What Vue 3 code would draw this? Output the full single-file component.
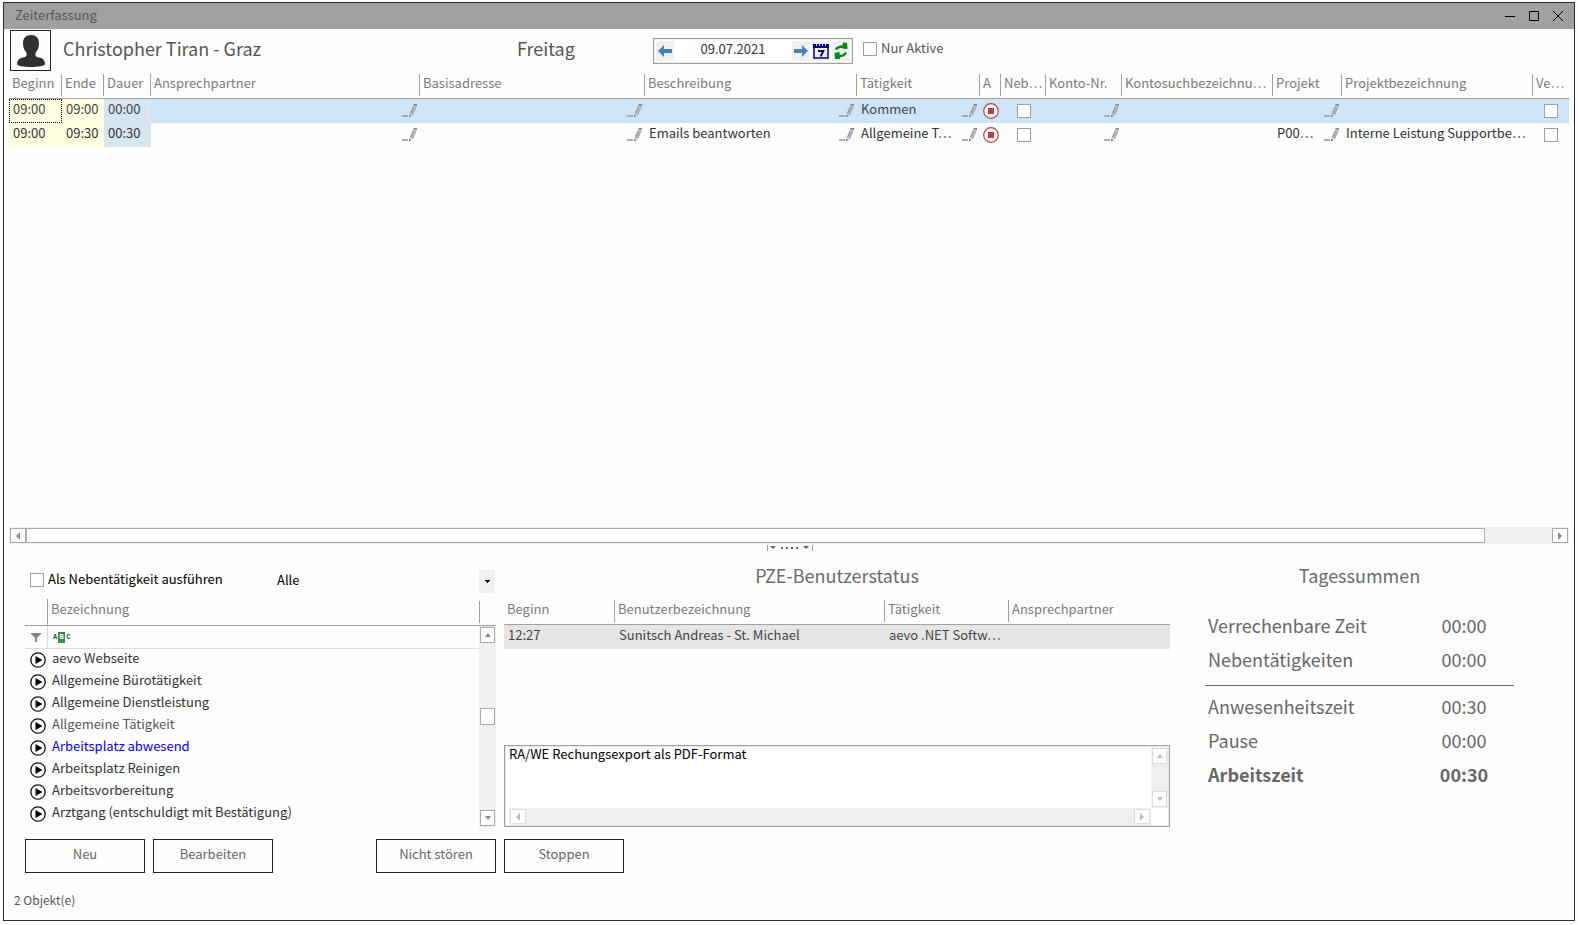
<script setup>
import { ref } from 'vue'

const columns = [
  { label: 'Beginn', width: 'w-begin' },
  { label: 'Ende', width: 'w-end' },
  { label: 'Dauer', width: 'w-duration' },
  { label: 'Ansprechpartner', width: 'w-contact' },
  { label: 'Basisadresse', width: 'w-address' },
  { label: 'Beschreibung', width: 'w-description' },
  { label: 'Tätigkeit', width: 'w-activity' },
  { label: 'A', width: 'w-a' },
  { label: 'Neb…', width: 'w-side' },
  { label: 'Konto-Nr.', width: 'w-account' },
  { label: 'Kontosuchbezeichnu…', width: 'w-search' },
  { label: 'Projekt', width: 'w-project' },
  { label: 'Projektbezeichnung', width: 'w-projectname' },
  { label: 'Ve…', width: 'w-billable' },
]

const entries = ref([
  { begin: '09:00', end: '09:00', duration: '00:00', description: '', activity: 'Kommen', project: '', projectName: '', side: false, billable: false, selected: true },
  { begin: '09:00', end: '09:30', duration: '00:30', description: 'Emails beantworten', activity: 'Allgemeine T…', project: 'P00…', projectName: 'Interne Leistung Supportbe…', side: false, billable: false, selected: false },
])

const activities = [
  { name: 'aevo Webseite' },
  { name: 'Allgemeine Bürotätigkeit' },
  { name: 'Allgemeine Dienstleistung' },
  { name: 'Allgemeine Tätigkeit', tone: 'muted' },
  { name: 'Arbeitsplatz abwesend', tone: 'absent' },
  { name: 'Arbeitsplatz Reinigen' },
  { name: 'Arbeitsvorbereitung' },
  { name: 'Arztgang (entschuldigt mit Bestätigung)' },
]

const sums = [
  { label: 'Verrechenbare Zeit', value: '00:00' },
  { label: 'Nebentätigkeiten', value: '00:00', last: true },
  { label: 'Anwesenheitszeit', value: '00:30', ruled: true },
  { label: 'Pause', value: '00:00' },
  { label: 'Arbeitszeit', value: '00:30', total: true },
]

const date = ref('09.07.2021')
const onlyActive = ref(false)
const asSide = ref(false)
const filter = ref('Alle')
const note = ref('RA/WE Rechungsexport als PDF-Format')
</script>

<template>
  <svg class="sprite" aria-hidden="true">
    <symbol id="pencil" viewBox="0 0 15 14">
      <path d="M0 11h6v2H0z" fill="#adadad" />
      <path d="M11 2 14.500 3 11 11 7.500 9.500z" fill="#a0a0a0" />
      <path d="M11.500 0h3.500v2.200l-4-1z" fill="#8c8c8c" />
      <path d="M7 10.500v3l3-1.500z" fill="#8a8a8a" />
      <path d="M12.500 3.500 9.500 10" stroke="#dedede" stroke-width="1" stroke-dasharray="1.500 1" />
    </symbol>
  </svg>
  <main class="window">
    <header class="titlebar">
      <span>Zeiterfassung</span>
      <div class="window-buttons">
        <button type="button" aria-label="Minimieren"><svg viewBox="0 0 12 12"><path d="M1 6.500h10" /></svg></button>
        <button type="button" aria-label="Maximieren"><svg viewBox="0 0 12 12"><path d="M1.500 1.500h9v9h-9z" /></svg></button>
        <button type="button" aria-label="Schließen"><svg viewBox="0 0 12 12"><path d="M1 1l10 10M11 1 1 11" /></svg></button>
      </div>
    </header>

    <section class="userbar">
      <div class="avatar">
        <svg viewBox="0 0 39 39"><path d="M20 4c5 0 8 3 8 8 0 4-1 7-3 9-1 2-1 4 1 5l4 1c3 1 4 4 4 6 0 2-6 3-14 3S6 35 6 33s1-5 4-6l4-1c2-1 2-3 1-5-2-2-3-5-3-9 0-5 3-8 8-8z" fill="#303030" /></svg>
      </div>
      <h1>Christopher Tiran - Graz</h1>
      <span class="weekday">Freitag</span>
      <div class="datebox">
        <button type="button" aria-label="Vorheriger Tag"><svg viewBox="0 0 18 20"><path d="M2 10l6-6v4h8v4H8v4z" fill="#4a7fb8" /></svg></button>
        <input v-model="date" type="text" aria-label="Datum">
        <button type="button" aria-label="Nächster Tag"><svg viewBox="0 0 18 20"><path d="M16 10l-6-6v4H2v4h8v4z" fill="#4a7fb8" /></svg></button>
        <button type="button" aria-label="Kalender">
          <svg viewBox="0 0 18 20">
            <path d="M2 4h14v13H2z" fill="#f0f0f0" stroke="#000080" stroke-width="1.500" />
            <path d="M1 3h16v4H1z" fill="#000080" />
            <path d="M4.500 2v3M7.500 2v3M10.500 2v3M13.500 2v3" stroke="#e4e4f4" />
            <path d="M6 10h5.500L8.500 15.500" fill="none" stroke="#000080" stroke-width="1.800" />
          </svg>
        </button>
        <button type="button" aria-label="Aktualisieren">
          <svg viewBox="0 0 18 20">
            <path d="M4 8.500q2-3.500 8-3M14 11.500q-2 4-8 3.500" fill="none" stroke="#008a0c" stroke-width="2.400" />
            <path d="M11 1.500l4 .5.500 6-5.500-.5zM7.500 11l-5 1 .500 6 5 0z" fill="#008a0c" />
          </svg>
        </button>
      </div>
      <label class="check"><input v-model="onlyActive" type="checkbox"><span>Nur Aktive</span></label>
    </section>

    <section class="entries">
      <table class="grid">
        <colgroup><col v-for="c in columns" :key="c.label" :class="c.width"></colgroup>
        <thead>
          <tr><th v-for="c in columns" :key="c.label" scope="col"><span>{{ c.label }}</span></th></tr>
        </thead>
        <tbody>
          <tr v-for="(e, i) in entries" :key="i" :class="{ selected: e.selected }">
            <td class="yellow" :class="{ focus: e.selected }">{{ e.begin }}</td>
            <td class="yellow">{{ e.end }}</td>
            <td class="blue">{{ e.duration }}</td>
            <td><div class="editable"><span></span><svg><use href="#pencil" /></svg></div></td>
            <td><div class="editable"><span></span><svg><use href="#pencil" /></svg></div></td>
            <td><div class="editable"><span>{{ e.description }}</span><svg><use href="#pencil" /></svg></div></td>
            <td><div class="editable"><span>{{ e.activity }}</span><svg><use href="#pencil" /></svg></div></td>
            <td class="center">
              <button type="button" class="stop" aria-label="Stoppen">
                <svg viewBox="0 0 16 16"><circle cx="8" cy="8" r="7.300" fill="#fff" stroke="#c23b3b" stroke-width="1.200" /><path d="M5 5h6v6H5z" fill="#c23b3b" /></svg>
              </button>
            </td>
            <td class="center"><input v-model="e.side" type="checkbox" aria-label="Nebentätigkeit"></td>
            <td><div class="editable"><span></span><svg><use href="#pencil" /></svg></div></td>
            <td></td>
            <td><div class="editable"><span>{{ e.project }}</span><svg><use href="#pencil" /></svg></div></td>
            <td>{{ e.projectName }}</td>
            <td class="center"><input v-model="e.billable" type="checkbox" aria-label="Verrechenbar"></td>
          </tr>
        </tbody>
      </table>
    </section>

    <div class="hscroll">
      <button type="button" aria-label="Nach links"><svg viewBox="0 0 8 8"><path d="M6 0v8L2 4z" /></svg></button>
      <div class="thumb"></div>
      <div class="rest"></div>
      <button type="button" aria-label="Nach rechts"><svg viewBox="0 0 8 8"><path d="M2 0v8l4-4z" /></svg></button>
    </div>

    <div class="splitter">
      <svg viewBox="0 0 46 6"><path d="M0 0h1v6H0zM45 0h1v6h-1z" fill="#999" /><path d="M3 1h6L6 4zM36 1h6l-3 3zM14 2h2v2h-2zM19 2h2v2h-2zM24 2h2v2h-2zM29 2h2v2h-2z" fill="#666" /></svg>
    </div>

    <section class="lower">
      <div class="panel">
        <div class="options">
          <label class="check"><input v-model="asSide" type="checkbox"><span>Als Nebentätigkeit ausführen</span></label>
          <div class="select">
            <select v-model="filter" aria-label="Tätigkeiten filtern"><option>Alle</option></select>
            <svg viewBox="0 0 16 23" aria-hidden="true"><path d="M6 10h5v1H6zM7 11h3v1H7zM8 12h1v1H8z" /></svg>
          </div>
        </div>
        <div class="list-head"><span></span><span class="head-name">Bezeichnung</span><span class="head-end"></span></div>
        <div class="list-body">
          <div class="list">
            <div class="filter-row">
              <span class="funnel"><svg viewBox="0 0 10 9"><path d="M0 0h10v1L6 5v4H4V5L0 1z" fill="#888" /></svg></span>
              <span class="abc"><i>A</i><b>B</b><i>C</i></span>
            </div>
            <ul>
              <li v-for="a in activities" :key="a.name" :class="a.tone">
                <button type="button" :aria-label="a.name + ' starten'">
                  <svg viewBox="0 0 16 16"><circle cx="8" cy="8" r="7.200" fill="#fff" stroke="#111" stroke-width="1.300" /><path d="M5.500 4l7 4-7 4z" fill="#000" /></svg>
                </button>
                <span>{{ a.name }}</span>
              </li>
            </ul>
          </div>
          <div class="vscroll">
            <button type="button" aria-label="Nach oben"><svg viewBox="0 0 8 8"><path d="M1 6h6L4 2z" /></svg></button>
            <div class="before"></div>
            <div class="thumb"></div>
            <div class="after"></div>
            <button type="button" aria-label="Nach unten"><svg viewBox="0 0 8 8"><path d="M1 2h6L4 6z" /></svg></button>
          </div>
        </div>
        <div class="actions">
          <button type="button">Neu</button>
          <button type="button">Bearbeiten</button>
          <button type="button" class="push">Nicht stören</button>
        </div>
      </div>

      <div class="panel">
        <h2>PZE-Benutzerstatus</h2>
        <table class="grid status">
          <colgroup><col class="s-begin"><col><col class="s-activity"><col class="s-contact"></colgroup>
          <thead>
            <tr><th scope="col"><span>Beginn</span></th><th scope="col"><span>Benutzerbezeichnung</span></th><th scope="col"><span>Tätigkeit</span></th><th scope="col"><span>Ansprechpartner</span></th></tr>
          </thead>
          <tbody>
            <tr><td>12:27</td><td>Sunitsch Andreas - St. Michael</td><td>aevo .NET Softw…</td><td></td></tr>
          </tbody>
        </table>
        <div class="notebox">
          <textarea v-model="note" aria-label="Notiz"></textarea>
          <div class="vscroll faint">
            <button type="button" aria-label="Notiz nach oben"><svg viewBox="0 0 8 8"><path d="M1 6h6L4 2z" /></svg></button>
            <div class="after"></div>
            <button type="button" aria-label="Notiz nach unten"><svg viewBox="0 0 8 8"><path d="M1 2h6L4 6z" /></svg></button>
          </div>
          <div class="hscroll faint">
            <button type="button" aria-label="Notiz nach links"><svg viewBox="0 0 8 8"><path d="M6 0v8L2 4z" /></svg></button>
            <div class="rest"></div>
            <button type="button" aria-label="Notiz nach rechts"><svg viewBox="0 0 8 8"><path d="M2 0v8l4-4z" /></svg></button>
          </div>
        </div>
        <div class="actions"><button type="button">Stoppen</button></div>
      </div>

      <div class="panel">
        <h2>Tagessummen</h2>
        <dl>
          <div v-for="s in sums" :key="s.label" :class="{ last: s.last, ruled: s.ruled, total: s.total }">
            <dt>{{ s.label }}</dt><dd>{{ s.value }}</dd>
          </div>
        </dl>
      </div>
    </section>

    <footer>2 Objekt(e)</footer>
  </main>
</template>

<style>
body { margin: 0; background: #fefefe; }
</style>

<style scoped>
* { box-sizing: border-box; }
.sprite { position: absolute; width: 0; height: 0; }
.window {
  display: flex; flex-direction: column;
  min-height: calc(100vh - 6px); margin: 2px 3px 0;
  border: 1px solid #2d2d2d; background: #fefefe; color: #333;
  font: 13px/20px "Noto Sans CJK KR", "Noto Sans", sans-serif;
}
button, input, select, textarea { font: inherit; color: inherit; margin: 0; padding: 0; border: 0; background: none; border-radius: 0; }
svg { display: block; }
h1, h2 { margin: 0; font-weight: 400; font-size: 18px; line-height: 26px; }
h1, .weekday { color: #555; }
h2 { color: #6a6a6a; text-align: center; }

.titlebar { display: flex; align-items: center; justify-content: space-between; height: 26px; padding: 0 4px 0 11px; background: #a0a0a0; color: #555; }
.titlebar span { padding-bottom: 2px; }
.window-buttons { display: flex; }
.window-buttons button { display: grid; place-items: center; width: 24px; height: 24px; }
.window-buttons svg { width: 12px; height: 12px; fill: none; stroke: #000; }

.userbar { display: grid; grid-template-columns: 41px 466px 136px 200px auto; align-items: center; justify-content: start; height: 45px; padding: 1px 6px 3px; }
.avatar { width: 41px; height: 41px; border: 1px solid #222; }
.userbar h1 { padding: 0 0 6px 12px; }
.weekday { padding-bottom: 6px; font-size: 18px; line-height: 26px; }
.datebox { display: grid; grid-template-columns: 18px 1fr 18px 18px 18px; column-gap: 2px; height: 26px; padding: 2px; border: 1px solid #a0a0a0; background: #fff; box-shadow: inset 0 0 0 1px #ededed; }
.datebox input { width: 100%; min-width: 0; text-align: center; line-height: 16px; padding-bottom: 4px; }
.datebox button { background: #f0f0f0; }
.datebox svg { width: 18px; height: 20px; }
.check { display: flex; align-items: center; gap: 4px; }
.check span { padding-bottom: 2px; }
.userbar .check { padding: 0 0 3px 10px; color: #555; }
input[type="checkbox"] { appearance: none; flex: none; display: block; width: 14px; height: 14px; border: 1px solid #a0a0a0; background: #fff; }
input[type="checkbox"]:checked { background: #4a7fb8; }

.entries { flex: 1; padding: 0 5px; }
.grid { width: 100%; border-collapse: separate; border-spacing: 0; table-layout: fixed; }
.grid th { height: 25px; padding: 0 0 2px; border-bottom: 1px solid #a0a0a0; text-align: left; font-weight: 400; color: #7a7a7a; }
.grid th span { display: block; height: 22px; line-height: 17px; padding: 0 0 0 3px; border-right: 1px solid #a0a0a0; white-space: nowrap; }
.grid th:last-child span { border-right: 0; }
.grid td { height: 24px; padding: 0 4px 5px; white-space: nowrap; line-height: 19px; }
.selected td { background: #cde5f7; color: #444; }
.grid td.yellow { background: #ffffe1; }
.grid td.blue { background: #d7e4f2; }
.grid td.focus { outline: 1px dotted #000; outline-offset: -1px; }
.grid td.center { padding: 0; }
.center input, .stop { margin: 0 auto; }
.stop { display: block; width: 16px; height: 16px; }
.editable { display: flex; justify-content: space-between; height: 19px; }
.editable svg { flex: none; width: 15px; height: 14px; margin: 5px -1px 0 0; }
.w-begin { width: 53px; } .w-end { width: 42px; } .w-duration { width: 47px; }
.w-address { width: 225px; } .w-description { width: 212px; } .w-activity { width: 123px; }
.w-a { width: 21px; } .w-side { width: 45px; } .w-account { width: 76px; }
.w-search { width: 151px; } .w-project { width: 69px; } .w-projectname { width: 191px; } .w-billable { width: 36px; }

.hscroll, .vscroll { display: flex; background: #efefef; padding: 1px; }
.hscroll { height: 17px; margin: 0 5px; }
.hscroll button, .vscroll button { flex: none; display: grid; place-items: center; width: 16px; height: 15px; border: 1px solid #aaa; background: #fff; }
.vscroll button { width: 15px; height: 16px; }
.hscroll svg, .vscroll svg { width: 8px; height: 8px; fill: #888; }
.thumb { border: 1px solid #aaa; background: #fff; }
.hscroll .thumb { flex: 1460; }
.hscroll .rest { flex: 67; }
.vscroll { flex-direction: column; width: 17px; }
.vscroll .thumb { flex: none; height: 17px; }
.vscroll .before { flex: 65; }
.vscroll .after { flex: 86; }
.faint button { border-color: #ddd; }
.faint svg { fill: #bbb; }

.splitter { display: flex; justify-content: center; height: 16px; padding: 1px 0 0 2px; }
.splitter svg { width: 46px; height: 6px; }

.lower { display: grid; grid-template-columns: 471fr 8px 666fr 35px 309fr; padding: 0 60px 0 21px; }
.panel:nth-child(2) { grid-column: 3; }
.panel:nth-child(3) { grid-column: 5; }
.panel { display: flex; flex-direction: column; min-width: 0; }
.panel h2 { margin: 2px 0 12px; }
.options { display: grid; grid-template-columns: 243px 1fr; height: 39px; padding: 10px 1px 0 5px; color: #000; }
.options .check { height: 20px; }
.select { position: relative; height: 23px; }
.select select { appearance: none; width: 100%; height: 20px; padding-left: 4px; line-height: 20px; }
.select svg { position: absolute; right: 0; top: 0; width: 16px; height: 23px; background: #f0f0f0; pointer-events: none; }
.list-head { display: grid; grid-template-columns: 22px 1fr 17px; height: 27px; border-bottom: 1px solid #a0a0a0; color: #7a7a7a; }
.head-name { border-left: 1px solid #a0a0a0; padding-left: 3px; line-height: 20px; }
.head-end { height: 22px; margin-top: 2px; border-left: 1px solid #a0a0a0; }
.list-body { display: flex; height: 201px; }
.list { flex: 1; }
.filter-row { display: flex; height: 23px; border-bottom: 1px solid #ddd; }
.funnel { width: 23px; border-right: 1px solid #ddd; padding: 7px 0 0 6px; }
.funnel svg { width: 10px; height: 9px; }
.abc { display: flex; align-items: center; gap: 1px; padding-left: 5px; font: bold 7px/11px "Liberation Mono", monospace; color: #444; }
.abc i { font-style: normal; }
.abc b { width: 7px; text-align: center; background: #2e9347; color: #fff; }
ul { list-style: none; margin: 0; padding: 0; }
li { display: flex; align-items: center; gap: 6px; height: 22px; padding-left: 5px; }
li span { padding-bottom: 5px; }
li button, li svg { width: 16px; height: 16px; }
.muted { color: #555; }
.absent { color: #0000ff; }
.actions { display: flex; gap: 8px; margin-top: 12px; }
.actions button { width: 120px; height: 34px; padding-bottom: 5px; border: 1px solid #222; color: #666; }
.actions .push { margin-left: auto; }

.s-begin { width: 111px; } .s-activity { width: 124px; } .s-contact { width: 161px; }
.status { color: #444; }
.status td { background: #e5e5e5; }
.notebox { display: grid; grid-template-columns: 1fr 17px; grid-template-rows: 1fr 17px; height: 82px; margin-top: auto; padding: 1px 1px 1px 4px; border: 1px solid #a0a0a0; box-shadow: inset 0 0 0 1px #e8e8e8; background: #fff; }
.notebox textarea { resize: none; overflow: hidden; outline: none; color: #000; line-height: 14px; width: 100%; height: 100%; display: block; }
.notebox .hscroll { margin: 0; }
.notebox .after, .notebox .rest { flex: 1; }

dl { margin: 12px 0 0; font-size: 18px; line-height: 26px; color: #666; }
dl div { display: grid; grid-template-columns: 1fr 100px; height: 34px; padding-left: 3px; }
dt, dd { margin: 0; }
dd { text-align: center; }
dl .last { height: 39px; }
dl .ruled { height: 42px; padding-top: 7px; border-top: 1px solid #666; }
.total { font-weight: 700; }

footer { height: 47px; padding: 17px 10px 0; font-size: 12px; color: #555; }
</style>
